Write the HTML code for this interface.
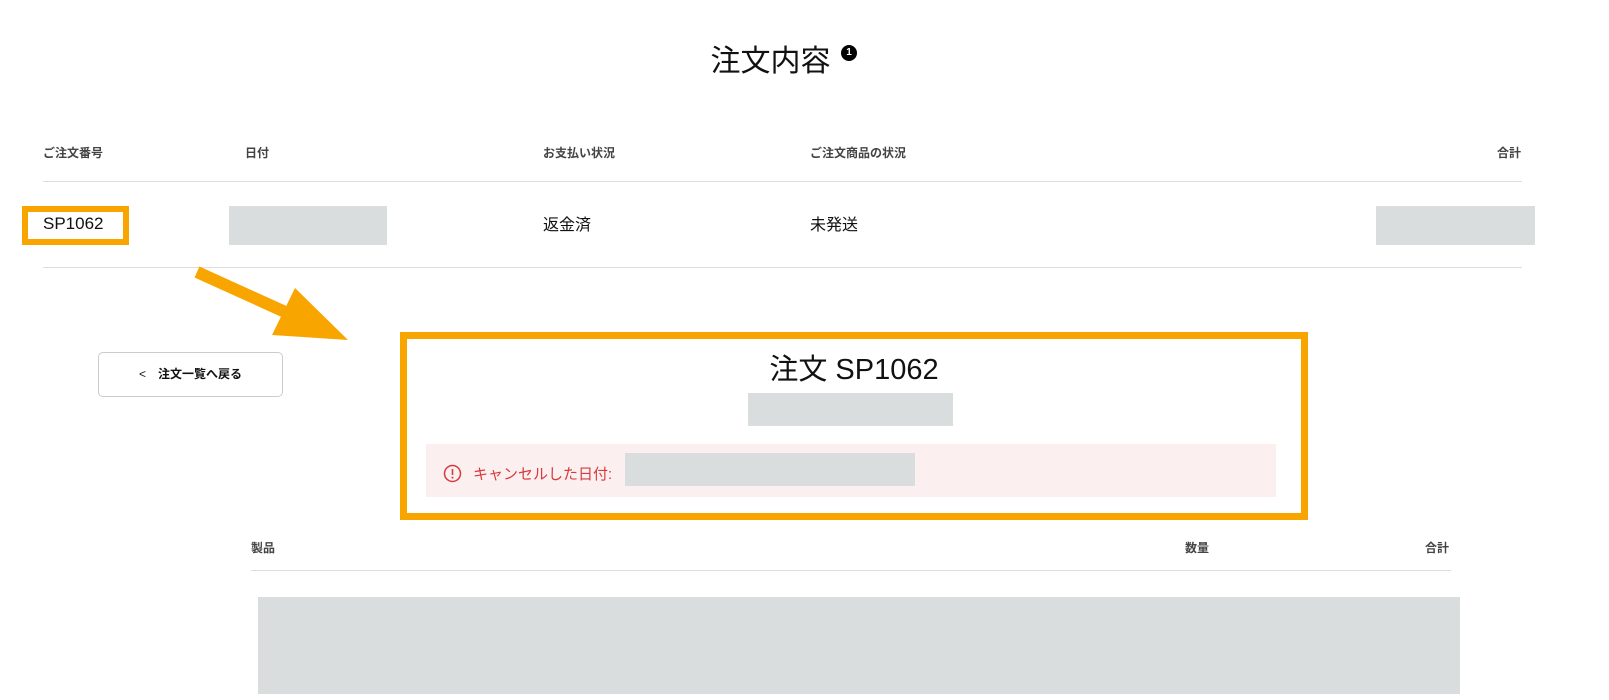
<!DOCTYPE html>
<html><head><meta charset="utf-8"><style>
body{margin:0;width:1609px;height:700px;overflow:hidden;background:#fff;font-family:"Liberation Sans","Noto Sans CJK JP",sans-serif;color:#111;position:relative}
.a{position:absolute}
.h{font-size:12px;font-weight:bold;color:#444;top:144px}
.g{background:#dadddd}
.line{height:1px;background:#ddd}
</style></head><body>
<div class="a" style="left:0;width:1609px;top:36px;text-align:center;font-size:30px;"><span style="position:relative;left:-34px">注文内容</span></div>
<div class="a" style="left:841px;top:45px;width:16px;height:16px;border-radius:50%;background:#000;color:#fff;font-size:10px;font-weight:bold;text-align:center;line-height:16px">1</div>

<div class="a h" style="left:43px">ご注文番号</div>
<div class="a h" style="left:245px">日付</div>
<div class="a h" style="left:543px">お支払い状況</div>
<div class="a h" style="left:810px">ご注文商品の状況</div>
<div class="a h" style="left:1497px">合計</div>
<div class="a line" style="left:43px;width:1479px;top:181px"></div>

<div class="a" style="left:22px;top:206px;width:95px;height:27px;border:6px solid #f9a500"></div>
<div class="a" style="left:43px;top:214px;font-size:17px">SP1062</div>
<div class="a g" style="left:229px;top:206px;width:158px;height:39px"></div>
<div class="a" style="left:543px;top:211px;font-size:16px">返金済</div>
<div class="a" style="left:810px;top:211px;font-size:16px">未発送</div>
<div class="a g" style="left:1376px;top:206px;width:159px;height:39px"></div>
<div class="a line" style="left:43px;width:1479px;top:267px"></div>

<svg class="a" style="left:0;top:0" width="1609" height="700"><line x1="197" y1="272" x2="305" y2="321" stroke="#f9a500" stroke-width="12"/><polygon points="295,288 348,340 272,335" fill="#f9a500"/></svg>

<div class="a" style="left:98px;top:352px;width:183px;height:43px;border:1px solid #ccc;border-radius:5px;font-size:12px;font-weight:bold;line-height:43px;text-align:center"><span style="font-weight:normal;margin-right:12px">&lt;</span>注文一覧へ戻る</div>

<div class="a" style="left:400px;top:332px;width:894px;height:174px;border:7px solid #f9a500"></div>
<div class="a" style="left:400px;width:908px;top:346px;text-align:center;font-size:29px">注文 SP1062</div>
<div class="a g" style="left:748px;top:393px;width:205px;height:33px"></div>
<div class="a" style="left:426px;top:444px;width:850px;height:53px;background:#fbefef"></div>
<svg class="a" style="left:443px;top:464px" width="19" height="19" viewBox="0 0 19 19"><circle cx="9.5" cy="9.5" r="8" fill="none" stroke="#d8393d" stroke-width="1.5"/><line x1="9.5" y1="5" x2="9.5" y2="11" stroke="#d8393d" stroke-width="1.6"/><circle cx="9.5" cy="13.6" r="1" fill="#d8393d"/></svg>
<div class="a" style="left:473px;top:463px;font-size:15px;color:#d8393d">キャンセルした日付:</div>
<div class="a g" style="left:625px;top:453px;width:290px;height:33px"></div>

<div class="a h" style="left:251px;top:539px">製品</div>
<div class="a h" style="left:1185px;top:539px">数量</div>
<div class="a h" style="left:1425px;top:539px">合計</div>
<div class="a line" style="left:251px;width:1200px;top:570px"></div>
<div class="a g" style="left:258px;top:597px;width:1202px;height:97px"></div>
</body></html>
